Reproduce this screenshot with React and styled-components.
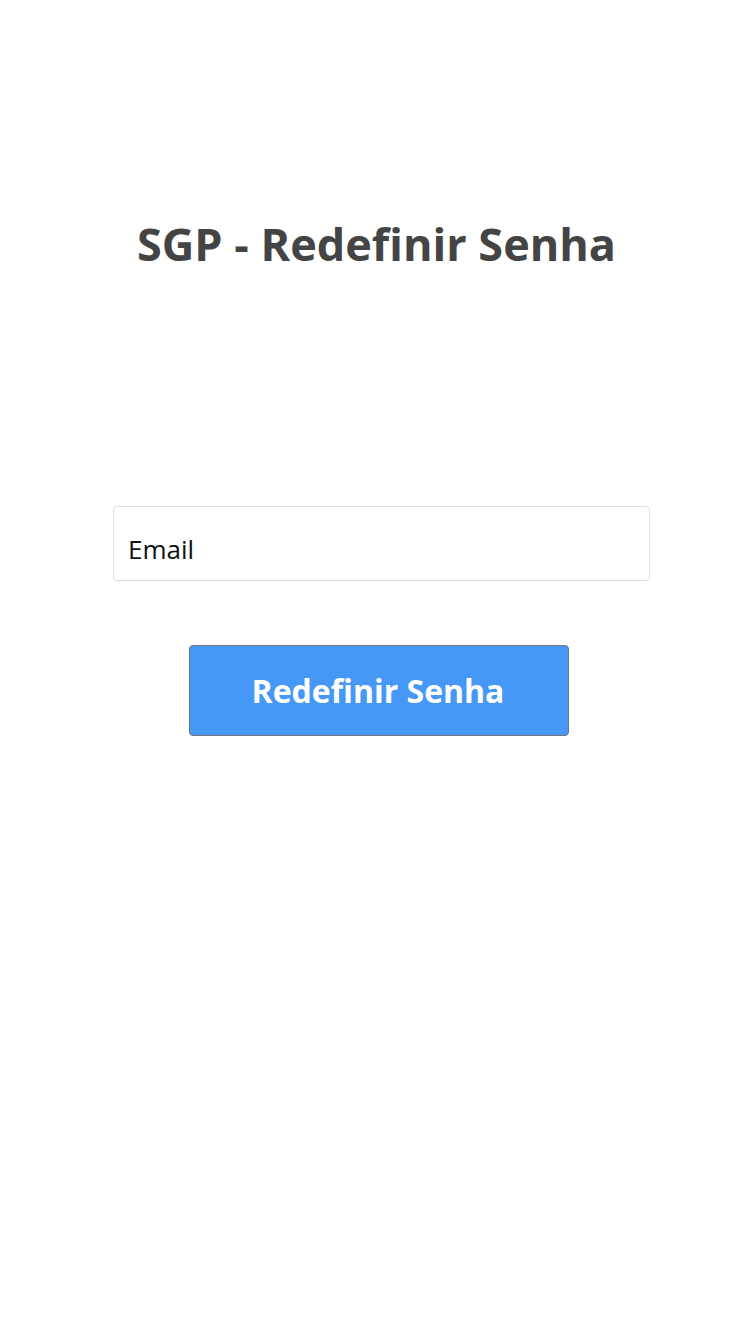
import React from "react";
import styled, { createGlobalStyle } from "styled-components";

const Global = createGlobalStyle`
  html, body { margin: 0; padding: 0; background: #fff; }
  body { font-family: "Open Sans", "Noto Sans", sans-serif; }
`;

const Page = styled.main`
  display: flex;
  flex-direction: column;
  align-items: center;
  min-height: 1334px;
  padding-top: 214px;
  box-sizing: border-box;
`;

const Title = styled.h1`
  margin: 0 0 0 3px;
  font-size: 45px;
  line-height: 60px;
  font-weight: 700;
  color: #444444;
`;

const Form = styled.form`
  margin-top: 232px;
  display: flex;
  flex-direction: column;
  align-items: center;
  gap: 64px;
  margin-left: 13px;
`;

const Input = styled.input`
  width: 537px;
  height: 75px;
  box-sizing: border-box;
  border: 1px solid #dddddd;
  border-radius: 4px;
  padding: 10px 14px 0;
  font-family: "Open Sans", "Noto Sans", sans-serif;
  font-size: 26px;
  color: #000;
  outline: none;
  &::placeholder { color: #111; opacity: 1; }
`;

const Button = styled.button`
  width: 380px;
  height: 91px;
  box-sizing: border-box;
  background: #4598f5;
  border: 1px solid #777;
  border-radius: 4px;
  color: #fff;
  font-family: "Open Sans", "Noto Sans", sans-serif;
  font-size: 32px;
  font-weight: 700;
  margin-left: -5px;
  padding: 0 2px 0 0;
  cursor: pointer;
`;

export default function App() {
  return (
    <>
      <Global />
      <Page>
        <Title>SGP - Redefinir Senha</Title>
        <Form onSubmit={(e) => e.preventDefault()}>
          <Input type="email" placeholder="Email" />
          <Button type="submit">Redefinir Senha</Button>
        </Form>
      </Page>
    </>
  );
}
